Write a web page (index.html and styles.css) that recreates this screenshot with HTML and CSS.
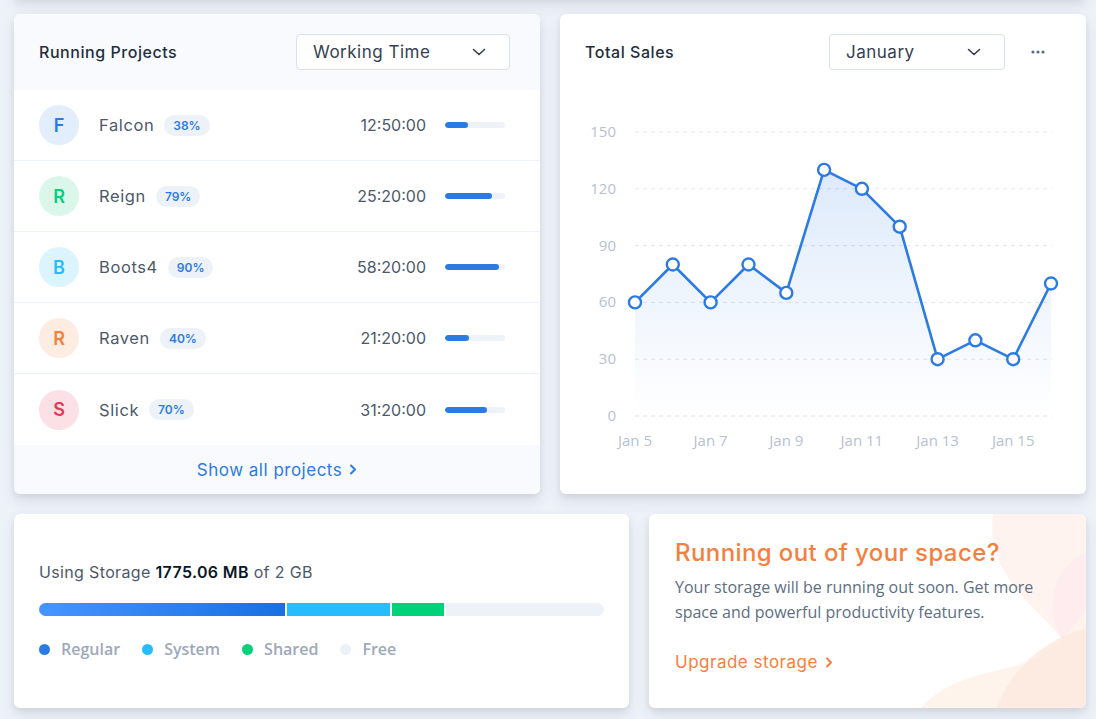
FILE: index.html
```html
<!DOCTYPE html>
<html lang="en">
<head>
<meta charset="utf-8">
<title>Dashboard</title>
<link rel="stylesheet" href="styles.css">
</head>
<body>
<div class="page">
  <div class="row row-top">
    <section class="card projects">
      <header class="card-head tinted">
        <h6 class="card-title">Running Projects</h6>
        <div class="select select-wide">
          <span>Working Time</span>
          <svg class="chev" width="14" height="8" viewBox="0 0 14 8"><path d="M1.5 1.5 L7 6.5 L12.5 1.5" fill="none" stroke="#344050" stroke-width="1.6" stroke-linecap="round" stroke-linejoin="round"/></svg>
        </div>
      </header>
      <ul class="project-list">
        <li class="project">
          <span class="avatar av-primary">F</span>
          <span class="pname">Falcon</span>
          <span class="badge">38%</span>
          <span class="time">12:50:00</span>
          <span class="progress"><span class="progress-fill" style="width:38%"></span></span>
        </li>
        <li class="project">
          <span class="avatar av-success">R</span>
          <span class="pname">Reign</span>
          <span class="badge">79%</span>
          <span class="time">25:20:00</span>
          <span class="progress"><span class="progress-fill" style="width:79%"></span></span>
        </li>
        <li class="project">
          <span class="avatar av-info">B</span>
          <span class="pname">Boots4</span>
          <span class="badge">90%</span>
          <span class="time">58:20:00</span>
          <span class="progress"><span class="progress-fill" style="width:90%"></span></span>
        </li>
        <li class="project">
          <span class="avatar av-warning">R</span>
          <span class="pname">Raven</span>
          <span class="badge">40%</span>
          <span class="time">21:20:00</span>
          <span class="progress"><span class="progress-fill" style="width:40%"></span></span>
        </li>
        <li class="project">
          <span class="avatar av-danger">S</span>
          <span class="pname">Slick</span>
          <span class="badge">70%</span>
          <span class="time">31:20:00</span>
          <span class="progress"><span class="progress-fill" style="width:70%"></span></span>
        </li>
      </ul>
      <footer class="card-foot tinted">
        <a class="link" href="#">Show all projects
          <svg width="8" height="11" viewBox="0 0 8 11"><path d="M2 1.5 L6 5.5 L2 9.5" fill="none" stroke="#2c7be5" stroke-width="2" stroke-linecap="round" stroke-linejoin="round"/></svg>
        </a>
      </footer>
    </section>

    <section class="card sales">
      <header class="card-head">
        <h6 class="card-title">Total Sales</h6>
        <div class="head-actions">
          <div class="select select-month">
            <span>January</span>
            <svg class="chev" width="14" height="8" viewBox="0 0 14 8"><path d="M1.5 1.5 L7 6.5 L12.5 1.5" fill="none" stroke="#344050" stroke-width="1.6" stroke-linecap="round" stroke-linejoin="round"/></svg>
          </div>
          <button class="dots" type="button">
            <svg width="14" height="4" viewBox="0 0 14 4"><circle cx="2" cy="2" r="1.6" fill="#5e6e82"/><circle cx="7" cy="2" r="1.6" fill="#5e6e82"/><circle cx="12" cy="2" r="1.6" fill="#5e6e82"/></svg>
          </button>
        </div>
      </header>
      <svg class="chart" width="480" height="345" viewBox="0 0 480 345">
        <defs>
          <linearGradient id="area" x1="0" y1="0" x2="0" y2="1">
            <stop offset="0" stop-color="#2c7be5" stop-opacity="0.16"/>
            <stop offset="1" stop-color="#2c7be5" stop-opacity="0"/>
          </linearGradient>
        </defs>
        <g stroke="#dfe7f3" stroke-width="1" stroke-dasharray="4 4">
          <line x1="50" y1="22" x2="467" y2="22"/>
          <line x1="50" y1="78.8" x2="467" y2="78.8"/>
          <line x1="50" y1="135.6" x2="467" y2="135.6"/>
          <line x1="50" y1="192.4" x2="467" y2="192.4"/>
          <line x1="50" y1="249.2" x2="467" y2="249.2"/>
          <line x1="50" y1="306" x2="467" y2="306"/>
        </g>
        <g class="axis" text-anchor="end">
          <text x="31" y="27">150</text>
          <text x="31" y="83.8">120</text>
          <text x="31" y="140.6">90</text>
          <text x="31" y="197.4">60</text>
          <text x="31" y="254.2">30</text>
          <text x="31" y="311">0</text>
        </g>
        <g class="axis" text-anchor="middle">
          <text x="50" y="336">Jan 5</text>
          <text x="125.6" y="336">Jan 7</text>
          <text x="201.3" y="336">Jan 9</text>
          <text x="276.9" y="336">Jan 11</text>
          <text x="352.6" y="336">Jan 13</text>
          <text x="428.2" y="336">Jan 15</text>
        </g>
        <path d="M50 192.4 L87.8 154.5 L125.6 192.4 L163.5 154.5 L201.3 182.9 L239.1 59.9 L276.9 78.8 L314.7 116.7 L352.6 249.2 L390.4 230.3 L428.2 249.2 L466 173.5 L466 306 L50 306 Z" fill="url(#area)"/>
        <path d="M50 192.4 L87.8 154.5 L125.6 192.4 L163.5 154.5 L201.3 182.9 L239.1 59.9 L276.9 78.8 L314.7 116.7 L352.6 249.2 L390.4 230.3 L428.2 249.2 L466 173.5" fill="none" stroke="#2c7be5" stroke-width="2.6" stroke-linejoin="round"/>
        <g fill="#fff" stroke="#2c7be5" stroke-width="2.4">
          <circle cx="50" cy="192.4" r="6"/>
          <circle cx="87.8" cy="154.5" r="6"/>
          <circle cx="125.6" cy="192.4" r="6"/>
          <circle cx="163.5" cy="154.5" r="6"/>
          <circle cx="201.3" cy="182.9" r="6"/>
          <circle cx="239.1" cy="59.9" r="6"/>
          <circle cx="276.9" cy="78.8" r="6"/>
          <circle cx="314.7" cy="116.7" r="6"/>
          <circle cx="352.6" cy="249.2" r="6"/>
          <circle cx="390.4" cy="230.3" r="6"/>
          <circle cx="428.2" cy="249.2" r="6"/>
          <circle cx="466" cy="173.5" r="6"/>
        </g>
      </svg>
    </section>
  </div>

  <div class="row row-bottom">
    <section class="card storage">
      <p class="storage-text">Using Storage <strong>1775.06 MB</strong> of 2 GB</p>
      <div class="storage-bar">
        <span class="seg seg-regular" style="width:43.6%"></span>
        <span class="seg seg-system" style="width:18.1%"></span>
        <span class="seg seg-shared" style="width:9.2%"></span>
        <span class="seg seg-free"></span>
      </div>
      <ul class="legend">
        <li><span class="dot d-regular"></span>Regular</li>
        <li><span class="dot d-system"></span>System</li>
        <li><span class="dot d-shared"></span>Shared</li>
        <li><span class="dot d-free"></span>Free</li>
      </ul>
    </section>

    <section class="card promo">
      <svg class="promo-bg" width="437" height="194" viewBox="0 0 437 194" preserveAspectRatio="none">
        <path d="M344 0 C338 45 365 75 390 100 C412 122 426 140 437 148 L437 0 Z" fill="#fef3ef"/>
        <path d="M437 38 C410 52 398 80 406 108 C414 134 428 146 437 150 Z" fill="#fde9ef" opacity="0.75"/>
        <path d="M272 194 C300 162 340 160 372 150 C402 140 422 118 437 95 L437 194 Z" fill="#fef4ec"/>
        <path d="M348 194 C362 152 400 124 437 114 L437 194 Z" fill="#fde8df" opacity="0.8"/>
      </svg>
      <div class="promo-content">
        <h4 class="promo-title">Running out of your space?</h4>
        <p class="promo-text">Your storage will be running out soon. Get more space and powerful productivity features.</p>
        <a class="link link-warning" href="#">Upgrade storage
          <svg width="8" height="11" viewBox="0 0 8 11"><path d="M2 1.5 L6 5.5 L2 9.5" fill="none" stroke="#f5803e" stroke-width="2" stroke-linecap="round" stroke-linejoin="round"/></svg>
        </a>
      </div>
    </section>
  </div>
</div>
</body>
</html>
```

FILE: styles.css
```css
* { box-sizing: border-box; }

html, body {
  margin: 0;
  padding: 0;
}

body {
  background: #edf2f9;
  font-family: "Open Sans", "Noto Sans", sans-serif;
  color: #5e6e82;
  width: 1096px;
  height: 719px;
  overflow: hidden;
}

.page {
  padding: 14px 10px 0 14px;
  display: flex;
  flex-direction: column;
  gap: 20px;
  position: relative;
}

.page::before {
  content: "";
  position: absolute;
  left: 14px;
  right: 10px;
  top: -20px;
  height: 20px;
  border-radius: 6px;
  background: #fff;
  box-shadow: 0 7px 14px 0 rgba(65, 69, 88, 0.08), 0 3px 6px 0 rgba(0, 0, 0, 0.05);
}

.row {
  display: grid;
  gap: 20px;
}

.row-top {
  grid-template-columns: 1fr 1fr;
  height: 480px;
}

.row-bottom {
  grid-template-columns: 615fr 437fr;
  height: 194px;
}

.card {
  background: #fff;
  border-radius: 6px;
  box-shadow: 0 7px 14px 0 rgba(65, 69, 88, 0.1), 0 3px 6px 0 rgba(0, 0, 0, 0.07);
  overflow: hidden;
  position: relative;
}

.tinted { background: #f9fafd; }

.card-head {
  height: 76px;
  display: flex;
  align-items: center;
  justify-content: space-between;
  padding: 0 30px 0 25px;
}

.card-title {
  margin: 0;
  font-family: "Inter", "Noto Sans", sans-serif;
  font-size: 16px;
  font-weight: 500;
  color: #232e3c;
  letter-spacing: 0.55px;
}

.select {
  height: 36px;
  border: 1px solid #d8e2ef;
  border-radius: 4px;
  background: #fff;
  display: flex;
  align-items: center;
  justify-content: space-between;
  padding: 0 23px 0 16px;
  font-family: "Inter", "Noto Sans", sans-serif;
  font-size: 17px;
  letter-spacing: 0.5px;
  color: #344050;
}

.select-wide { width: 214px; }
.select-month { width: 176px; }

.chev { display: block; }

/* projects */
.projects { display: flex; flex-direction: column; }

.project-list {
  list-style: none;
  margin: 0;
  padding: 0;
}

.project {
  height: 71px;
  display: flex;
  align-items: center;
  padding: 0 35px 0 25px;
  border-bottom: 1px solid #edf2f9;
}

.project:last-child { border-bottom: none; }

.avatar {
  width: 40px;
  height: 40px;
  border-radius: 50%;
  display: flex;
  align-items: center;
  justify-content: center;
  font-family: "Inter", "Noto Sans", sans-serif;
  font-weight: 600;
  font-size: 18px;
  margin-right: 20px;
}

.av-primary { background: #e3eefc; color: #2c7be5; }
.av-success { background: #daf7ea; color: #00d27a; }
.av-info { background: #dcf4fe; color: #27bcfd; }
.av-warning { background: #fdece2; color: #f5803e; }
.av-danger { background: #fbe1e6; color: #e63757; }

.pname {
  font-family: "Inter", "Noto Sans", sans-serif;
  font-size: 16.5px;
  letter-spacing: 0.6px;
  color: #4d5969;
}

.badge {
  margin-left: 10px;
  height: 21px;
  padding: 0 9px;
  border-radius: 11px;
  background: #edf2f9;
  color: #2c7be5;
  font-family: "Inter", "Noto Sans", sans-serif;
  font-size: 12px;
  font-weight: 600;
  display: inline-flex;
  align-items: center;
}

.time {
  margin-left: auto;
  font-family: "Inter", "Noto Sans", sans-serif;
  font-size: 16px;
  color: #4d5969;
}

.progress {
  margin-left: 19px;
  width: 60px;
  height: 6px;
  border-radius: 3px;
  background: #edf2f9;
  overflow: hidden;
  display: block;
}

.progress-fill {
  display: block;
  height: 100%;
  border-radius: 3px;
  background: #2c7be5;
}

.card-foot {
  flex: 1;
  display: flex;
  align-items: center;
  justify-content: center;
}

.link {
  text-decoration: none;
  color: #2c7be5;
  font-family: "Inter", "Noto Sans", sans-serif;
  font-size: 17px;
  letter-spacing: 0.5px;
  display: inline-flex;
  align-items: center;
  gap: 7px;
}

.link-warning { color: #f5803e; }

/* sales */
.head-actions {
  display: flex;
  align-items: center;
}

.sales .card-head { padding-right: 34px; }

.dots {
  margin-left: 19px;
  width: 28px;
  height: 28px;
  border: none;
  background: transparent;
  display: flex;
  align-items: center;
  justify-content: center;
  padding: 0;
}

.chart {
  display: block;
  margin: 20px 0 0 25px;
}

.axis text {
  font-family: "Open Sans", "Noto Sans", sans-serif;
  font-size: 15px;
  fill: #b6c1d2;
}

/* storage */
.storage {
  padding: 0 25px;
  display: flex;
  flex-direction: column;
  justify-content: center;
}

.storage-text {
  margin: 0;
  font-family: "Inter", "Noto Sans", sans-serif;
  font-size: 16px;
  letter-spacing: 0.35px;
  color: #4d5969;
}

.storage-text strong {
  color: #0b1727;
  font-weight: 600;
}

.storage-bar {
  margin-top: 21px;
  height: 13px;
  display: flex;
  gap: 2px;
  border-radius: 7px;
  overflow: hidden;
}

.seg { display: block; height: 100%; }
.seg-regular { background: linear-gradient(90deg, #4695ff, #1970e2); }
.seg-system { background: #27bcfd; }
.seg-shared { background: #00d27a; }
.seg-free { flex: 1; background: #edf2f9; }

.legend {
  list-style: none;
  margin: 22px 0 0;
  padding: 0;
  display: flex;
  gap: 22px;
}

.legend li {
  display: flex;
  align-items: center;
  font-size: 16px;
  font-weight: 600;
  color: #9da9bb;
}

.dot {
  width: 11px;
  height: 11px;
  border-radius: 50%;
  margin-right: 11px;
}

.d-regular { background: #2c7be5; }
.d-system { background: #27bcfd; }
.d-shared { background: #00d27a; }
.d-free { background: #edf2f9; }

/* promo */
.promo-bg {
  position: absolute;
  right: 0;
  top: 0;
  width: 100%;
  height: 100%;
}

.promo-content {
  position: relative;
  padding: 24px 26px 0;
}

.promo-title {
  margin: 0;
  font-family: "Inter", "Noto Sans", sans-serif;
  font-size: 24px;
  font-weight: 500;
  letter-spacing: 0.4px;
  color: #f5803e;
}

.promo-text {
  margin: 8px 0 0;
  font-size: 16px;
  line-height: 25px;
  color: #5e6e82;
}

.promo .link { margin-top: 27px; }
```
